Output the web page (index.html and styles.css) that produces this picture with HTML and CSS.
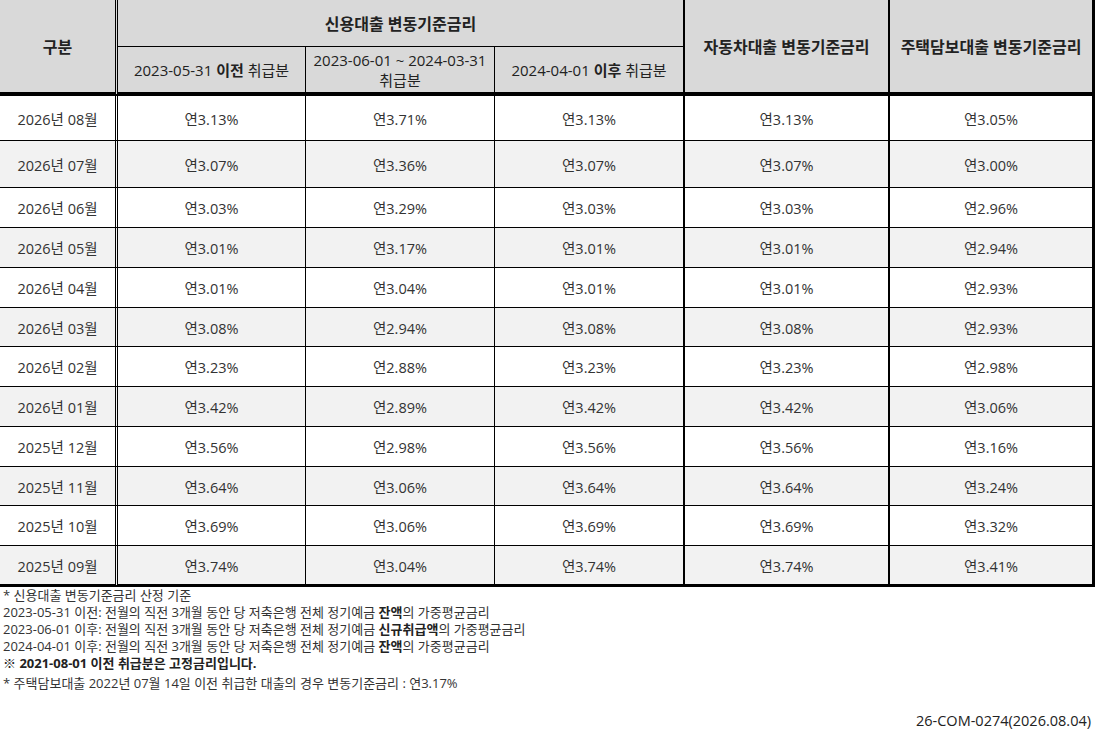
FILE: index.html
```html
<!DOCTYPE html>
<html lang="ko">
<head>
<meta charset="utf-8">
<title>변동기준금리</title>
<link rel="stylesheet" href="styles.css">
</head>
<body>
<div class="page">
  <table class="rates">
    <colgroup>
      <col class="c0"><col class="c1"><col class="c2"><col class="c3"><col class="c4"><col class="c5">
    </colgroup>
    <thead>
      <tr class="h1">
        <th rowspan="2" class="gubun">구분</th>
        <th colspan="3" class="sep2">신용대출 변동기준금리</th>
        <th rowspan="2" class="sep2 tall">자동차대출 변동기준금리</th>
        <th rowspan="2" class="last tall">주택담보대출 변동기준금리</th>
      </tr>
      <tr class="h2">
        <th class="sub">2023-05-31 <b>이전</b> 취급분</th>
        <th class="sub">2023-06-01 ~ 2024-03-31<br>취급분</th>
        <th class="sub sep2">2024-04-01 <b>이후</b> 취급분</th>
      </tr>
    </thead>
    <tbody>
      <tr class="r45"><td class="gubun">2026년 08월</td><td>연3.13%</td><td>연3.71%</td><td class="sep2">연3.13%</td><td class="sep2">연3.13%</td><td class="last">연3.05%</td></tr>
      <tr class="r47 alt"><td class="gubun">2026년 07월</td><td>연3.07%</td><td>연3.36%</td><td class="sep2">연3.07%</td><td class="sep2">연3.07%</td><td class="last">연3.00%</td></tr>
      <tr class="r40"><td class="gubun">2026년 06월</td><td>연3.03%</td><td>연3.29%</td><td class="sep2">연3.03%</td><td class="sep2">연3.03%</td><td class="last">연2.96%</td></tr>
      <tr class="r40 alt"><td class="gubun">2026년 05월</td><td>연3.01%</td><td>연3.17%</td><td class="sep2">연3.01%</td><td class="sep2">연3.01%</td><td class="last">연2.94%</td></tr>
      <tr class="r40"><td class="gubun">2026년 04월</td><td>연3.01%</td><td>연3.04%</td><td class="sep2">연3.01%</td><td class="sep2">연3.01%</td><td class="last">연2.93%</td></tr>
      <tr class="r39 alt"><td class="gubun">2026년 03월</td><td>연3.08%</td><td>연2.94%</td><td class="sep2">연3.08%</td><td class="sep2">연3.08%</td><td class="last">연2.93%</td></tr>
      <tr class="r40"><td class="gubun">2026년 02월</td><td>연3.23%</td><td>연2.88%</td><td class="sep2">연3.23%</td><td class="sep2">연3.23%</td><td class="last">연2.98%</td></tr>
      <tr class="r40 alt"><td class="gubun">2026년 01월</td><td>연3.42%</td><td>연2.89%</td><td class="sep2">연3.42%</td><td class="sep2">연3.42%</td><td class="last">연3.06%</td></tr>
      <tr class="r40"><td class="gubun">2025년 12월</td><td>연3.56%</td><td>연2.98%</td><td class="sep2">연3.56%</td><td class="sep2">연3.56%</td><td class="last">연3.16%</td></tr>
      <tr class="r39 alt"><td class="gubun">2025년 11월</td><td>연3.64%</td><td>연3.06%</td><td class="sep2">연3.64%</td><td class="sep2">연3.64%</td><td class="last">연3.24%</td></tr>
      <tr class="r40"><td class="gubun">2025년 10월</td><td>연3.69%</td><td>연3.06%</td><td class="sep2">연3.69%</td><td class="sep2">연3.69%</td><td class="last">연3.32%</td></tr>
      <tr class="rlast alt"><td class="gubun">2025년 09월</td><td>연3.74%</td><td>연3.04%</td><td class="sep2">연3.74%</td><td class="sep2">연3.74%</td><td class="last">연3.41%</td></tr>
    </tbody>
  </table>

  <div class="notes">
    <p>* 신용대출 변동기준금리 산정 기준</p>
    <p>2023-05-31 이전: 전월의 직전 3개월 동안 당 저축은행 전체 정기예금 <b>잔액</b>의 가중평균금리</p>
    <p>2023-06-01 이후: 전월의 직전 3개월 동안 당 저축은행 전체 정기예금 <b>신규취급액</b>의 가중평균금리</p>
    <p>2024-04-01 이후: 전월의 직전 3개월 동안 당 저축은행 전체 정기예금 <b>잔액</b>의 가중평균금리</p>
    <p class="strong">※ 2021-08-01 이전 취급분은 고정금리입니다.</p>
    <p class="gap">* 주택담보대출 2022년 07월 14일 이전 취급한 대출의 경우 변동기준금리 : 연3.17%</p>
  </div>

  <div class="code">26-COM-0274(2026.08.04)</div>
</div>
</body>
</html>
```

FILE: styles.css
```css
* { box-sizing: border-box; }

html, body {
  margin: 0;
  padding: 0;
  background: #fff;
}

body {
  font-family: "Open Sans", "Noto Sans CJK KR", sans-serif;
  color: #333;
}

.page {
  width: 1096px;
  height: 735px;
  display: flex;
  flex-direction: column;
}

.rates {
  border-collapse: separate;
  border-spacing: 0;
  table-layout: fixed;
  width: 1095px;
  font-size: 14.5px;
}

.c0 { width: 118px; }
.c1 { width: 188px; }
.c2 { width: 189px; }
.c3 { width: 190px; }
.c4 { width: 205px; }
.c5 { width: 205px; }

.rates th,
.rates td {
  padding: 0;
  text-align: center;
  vertical-align: middle;
  border-right: 1px solid #000;
  border-bottom: 1px solid #000;
}

.rates th {
  background: #d9d9d9;
  color: #222;
  font-weight: bold;
  font-size: 16px;
}

.rates th.sub {
  font-weight: normal;
  font-size: 15px;
  line-height: 20px;
  color: #222;
  border-bottom: 4px solid #000;
}

.rates th.sub b { font-weight: bold; }

.rates th.gubun,
.rates th.tall {
  border-bottom: 4px solid #000;
}

.rates .gubun {
  border-right: 3px double #000;
}

.rates .sep2 {
  border-right: 2px solid #000;
}

.rates .last {
  border-right: 3px solid #000;
}

.h1 th { height: 47px; }
.h1 th.gubun, .h1 th.tall { height: 96px; }
.h2 th { height: 49px; }

.r45 td { height: 45px; }
.r47 td { height: 47px; }
.r40 td { height: 40px; }
.r39 td { height: 39px; }
.rlast td { height: 41px; border-bottom: 3px solid #000; }

.alt td { background: #f2f2f2; }

.notes {
  margin-top: 0;
  padding-left: 3px;
  font-size: 13px;
  line-height: 17px;
  color: #333;
}

.notes p { margin: 0; }
.notes b { font-weight: bold; color: #222; }
.notes .strong { font-weight: bold; color: #222; }
.notes .gap { margin-top: 3px; }

.code {
  margin-top: auto;
  align-self: flex-end;
  margin-right: 5px;
  margin-bottom: 5px;
  font-size: 14.5px;
  color: #222;
}
```
